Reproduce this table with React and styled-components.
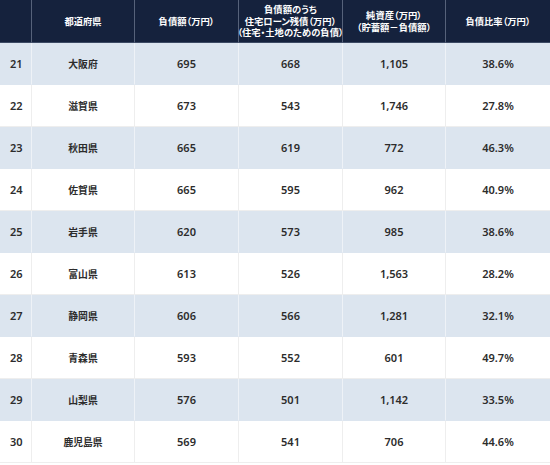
import React from "react";
import styled, { createGlobalStyle } from "styled-components";

const Global = createGlobalStyle`
  html, body { margin: 0; padding: 0; background: #ffffff; }
  body { font-family: "Noto Sans", "Noto Sans CJK JP", sans-serif; }
`;

const Table = styled.div`
  width: 550px;
  display: grid;
  grid-template-columns: 32px 103px 104px 104px 103px 104px;
  grid-template-rows: 43px;
  grid-auto-rows: 42px;
`;

const HeadCell = styled.div`
  background: #15223d;
  color: #ffffff;
  font-family: "Noto Sans CJK JP", sans-serif;
  font-weight: 700;
  font-size: 9.3px;
  line-height: 11.4px;
  font-feature-settings: "palt";
  display: flex;
  align-items: center;
  justify-content: center;
  text-align: center;
  white-space: nowrap;
  border-right: ${(p) => (p.$last ? "none" : "1px solid #56627a")};
  border-bottom: 1px solid #3c4a64;
  box-sizing: border-box;
  padding-top: 1px;
`;

const HeadLine = styled.div`
  display: block;
`;

const Cell = styled.div`
  background: ${(p) => (p.$shade ? "#dce5ef" : "#ffffff")};
  color: #2c2c2c;
  font-family: ${(p) =>
    p.$jp ? '"Noto Sans CJK JP", sans-serif' : '"Noto Sans", "Noto Sans CJK JP", sans-serif'};
  font-weight: ${(p) => (p.$jp ? 700 : 600)};
  font-size: ${(p) => (p.$jp ? "9.8px" : "11px")};
  font-feature-settings: "palt";
  display: flex;
  align-items: center;
  justify-content: ${(p) => (p.$left ? "flex-start" : "center")};
  padding-left: ${(p) => (p.$left ? "10px" : "0")};
  border-right: ${(p) =>
    p.$last ? "none" : p.$shade ? "1px solid #eef2f7" : "1px solid #eeeeee"};
  border-bottom: 1px solid ${(p) => (p.$shade ? "#dce5ef" : "#eeeeee")};
  box-sizing: border-box;
`;

const heads = [
  [""],
  ["都道府県"],
  ["負債額（万円）"],
  ["負債額のうち", "住宅ローン残債（万円）", "（住宅・土地のための負債）"],
  ["純資産（万円）", "（貯蓄額－負債額）"],
  ["負債比率（万円）"],
];

const rows = [
  ["21", "大阪府", "695", "668", "1,105", "38.6%"],
  ["22", "滋賀県", "673", "543", "1,746", "27.8%"],
  ["23", "秋田県", "665", "619", "772", "46.3%"],
  ["24", "佐賀県", "665", "595", "962", "40.9%"],
  ["25", "岩手県", "620", "573", "985", "38.6%"],
  ["26", "富山県", "613", "526", "1,563", "28.2%"],
  ["27", "静岡県", "606", "566", "1,281", "32.1%"],
  ["28", "青森県", "593", "552", "601", "49.7%"],
  ["29", "山梨県", "576", "501", "1,142", "33.5%"],
  ["30", "鹿児島県", "569", "541", "706", "44.6%"],
];

export default function App() {
  return (
    <>
      <Global />
      <Table>
        {heads.map((h, i) => (
          <HeadCell key={"h" + i} $last={i === heads.length - 1}>
            <div>
              {h.map((line, j) => (
                <HeadLine key={j}>{line}</HeadLine>
              ))}
            </div>
          </HeadCell>
        ))}
        {rows.map((r, ri) =>
          r.map((v, ci) => (
            <Cell
              key={ri + "-" + ci}
              $shade={ri % 2 === 0}
              $jp={ci === 1}
              $left={ci === 0}
              $last={ci === r.length - 1}
            >
              {v}
            </Cell>
          ))
        )}
      </Table>
    </>
  );
}
